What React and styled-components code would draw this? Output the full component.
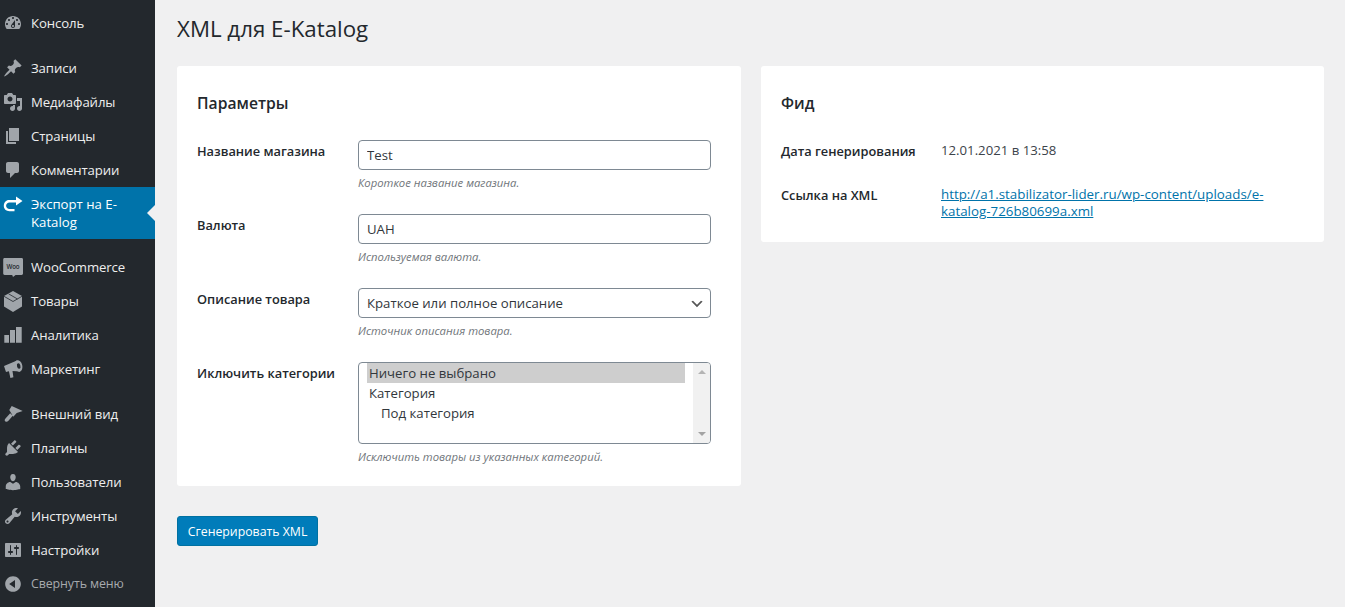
import React from 'react';
import styled, { createGlobalStyle } from 'styled-components';

const Global = createGlobalStyle`
  html, body { margin: 0; padding: 0; background: #f0f0f1; }
  body { font-family: "Open Sans", "Noto Sans", sans-serif; color: #3c434a; overflow: hidden; }
  * { box-sizing: border-box; }
`;

const Page = styled.div`
  display: flex;
  width: 1345px;
  height: 607px;
  overflow: hidden;
`;
const Sidebar = styled.nav`
  width: 155px;
  flex: none;
  background: #23282d;
  padding-top: 6px;
  display: flex;
  flex-direction: column;
`;
const MenuGroup = styled.div`
  display: flex;
  flex-direction: column;
  margin-bottom: 11px;
`;
const MenuItem = styled.a`
  position: relative;
  display: flex;
  align-items: ${p => (p.$active ? 'flex-start' : 'center')};
  min-height: 34px;
  padding: ${p => (p.$active ? '8px 8px 8px 3px' : '0 8px 0 3px')};
  gap: 8px;
  font-size: ${p => (p.$muted ? '12.4px' : '13.2px')};
  line-height: 18px;
  letter-spacing: ${p => (p.$active ? '0' : '-0.1px')};
  color: ${p => (p.$active ? '#fff' : p.$muted ? '#a7aaad' : '#eee')};
  background: ${p => (p.$active ? '#0073aa' : 'transparent')};
  &::after {
    content: '';
    display: ${p => (p.$active ? 'block' : 'none')};
    position: absolute;
    right: 0;
    top: 18px;
    border: 8px solid transparent;
    border-right-color: #f0f0f1;
    border-left-width: 0;
  }
`;
const MenuIcon = styled.svg`
  width: 20px;
  height: 20px;
  flex: none;
  overflow: visible;
  fill: ${p => (p.$active ? '#fff' : '#a0a5aa')};
`;
const Main = styled.main`
  flex: 1;
  min-width: 0;
  padding: 0 21px 0 22px;
`;
const Title = styled.h1`
  margin: 0;
  padding-top: 14px;
  height: 66px;
  font-size: 22.3px;
  line-height: 30px;
  font-weight: 400;
  color: #23282d;
`;
const Columns = styled.div`
  display: grid;
  grid-template-columns: 564px 563px;
  gap: 20px;
  align-items: start;
`;
const Card = styled.section`
  background: #fff;
  border-radius: 3px;
  padding: 26px 20px ${p => p.$bottom ?? 21}px;
`;
const CardTitle = styled.h2`
  margin: 0 0 25px;
  font-size: 15.7px;
  line-height: 23px;
  font-weight: 600;
  color: #23282d;
`;
const FieldRow = styled.div`
  display: grid;
  grid-template-columns: 161px 1fr;
  margin-bottom: 23px;
  &:last-child { margin-bottom: 0; }
`;
const Label = styled.label`
  font-size: 12.8px;
  line-height: 18px;
  font-weight: 600;
  color: #23282d;
  padding-top: 2px;
`;
const fieldBase = `
  display: block;
  width: 353px;
  height: 30px;
  border: 1px solid #7e8993;
  border-radius: 4px;
  background-color: #fff;
  color: #32373c;
  font-family: inherit;
  font-size: 13.2px;
  padding: 0 8px;
  outline: none;
`;
const TextInput = styled.input`${fieldBase}`;
const Select = styled.select`
  ${fieldBase}
  appearance: none;
  padding-right: 24px;
  background-image: url("data:image/svg+xml;charset=UTF-8,%3Csvg xmlns='http://www.w3.org/2000/svg' width='20' height='20'%3E%3Cpath d='M5 6l5 5 5-5 2 1-7 7-7-7 2-1z' fill='%23555'/%3E%3C/svg%3E");
  background-repeat: no-repeat;
  background-size: 16px 16px;
  background-position: right 5px top 55%;
`;
const ListBox = styled.div`
  display: flex;
  width: 353px;
  height: 82px;
  border: 1px solid #7e8993;
  border-radius: 4px;
  overflow: hidden;
  background: #fff;
`;
const ListOptions = styled.div`
  flex: 1;
  padding: 0 8px;
`;
const ListOption = styled.div`
  height: 20px;
  line-height: 20px;
  padding-left: ${p => (p.$depth ? 14 : 2)}px;
  font-size: 13.2px;
  color: #32373c;
  background: ${p => (p.$selected ? '#cecece' : 'transparent')};
`;
const ScrollTrack = styled.div`
  width: 17px;
  flex: none;
  background: #f1f1f1;
  display: flex;
  flex-direction: column;
  justify-content: space-between;
  align-items: center;
  padding: 7px 0;
`;
const ScrollArrow = styled.span`
  width: 0;
  height: 0;
  border-left: 4px solid transparent;
  border-right: 4px solid transparent;
  border-${p => (p.$down ? 'top' : 'bottom')}: 4px solid ${p => (p.$down ? '#a3a3a3' : '#b4b4b4')};
`;
const Hint = styled.p`
  margin: 5px 0 0;
  font-size: 11.3px;
  line-height: 16px;
  font-style: italic;
  color: #70757a;
`;
const InfoRow = styled.div`
  display: grid;
  grid-template-columns: 160px 1fr;
  padding-top: 2px;
  margin-bottom: ${p => p.$gap ?? 0}px;
`;
const InfoValue = styled.div`
  font-size: 13.2px;
  line-height: 17px;
  color: #3c434a;
`;
const InfoLabel = styled.div`
  font-size: 12.8px;
  line-height: 18px;
  font-weight: 600;
  color: #23282d;
`;
const XmlLink = styled.a`
  font-size: 13.35px;
  color: #0073aa;
  text-decoration: underline;
`;
const Actions = styled.div`
  margin-top: 30px;
`;
const Button = styled.button`
  width: 141px;
  height: 30px;
  border: 1px solid #0071a1;
  border-radius: 3px;
  background: #007cba;
  color: #fff;
  font-family: inherit;
  font-size: 12.3px;
  padding: 0;
`;

const Icon = ({ d, active, children }) => (
  <MenuIcon viewBox="0 0 20 20" $active={active} aria-hidden="true">
    {d && <path d={d} fillRule="evenodd" />}
    {children}
  </MenuIcon>
);

const paths = {
  dashboard: 'M3.76 16h12.48c1.1-1.37 1.76-3.11 1.76-5 0-4.42-3.58-8-8-8s-8 3.58-8 8c0 1.89.66 3.63 1.76 5zM10 4c.55 0 1 .45 1 1s-.45 1-1 1-1-.45-1-1 .45-1 1-1zM6 6c.55 0 1 .45 1 1s-.45 1-1 1-1-.45-1-1 .45-1 1-1zm8 0c.55 0 1 .45 1 1s-.45 1-1 1-1-.45-1-1 .45-1 1-1zm-5.37 5.55L12 7v6c0 1.1-.9 2-2 2s-2-.9-2-2c0-.57.24-1.08.63-1.45zM4 10c.55 0 1 .45 1 1s-.45 1-1 1-1-.45-1-1 .45-1 1-1zm12 0c.55 0 1 .45 1 1s-.45 1-1 1-1-.45-1-1 .45-1 1-1zm-5 3c0-.55-.45-1-1-1s-1 .45-1 1 .45 1 1 1 1-.45 1-1z',
  post: 'M10.44 3.02l1.82-1.82 6.36 6.35-1.83 1.82c-1.05-.68-2.48-.57-3.41.36l-.75.75c-.92.93-1.04 2.35-.35 3.41l-1.83 1.82-2.41-2.41-2.8 2.79c-.42.42-3.38 2.71-3.8 2.29s1.86-3.39 2.28-3.81l2.79-2.79L4.1 9.36l1.83-1.82c1.05.69 2.48.57 3.4-.36l.75-.75c.93-.92 1.05-2.35.36-3.41z',
  media: 'M13 11V4c0-.55-.45-1-1-1h-1.67L9 1H5L3.67 3H2c-.55 0-1 .45-1 1v7c0 .55.45 1 1 1h10c.55 0 1-.45 1-1zM7 4.5c1.38 0 2.5 1.12 2.5 2.5S8.38 9.5 7 9.5 4.5 8.38 4.5 7 5.62 4.5 7 4.5zM14 6h5v10.5c0 1.38-1.12 2.5-2.5 2.5S14 17.88 14 16.5s1.12-2.5 2.5-2.5c.17 0 .34.02.5.05V9h-3V6zm-4 8.05V13h2v3.5c0 1.38-1.12 2.5-2.5 2.5S7 17.88 7 16.5 8.12 14 9.5 14c.17 0 .34.02.5.05z',
  page: 'M6 15V2h10v13H6zm-1 1h8v2H3V5h2v11z',
  comments: 'M5 2h9c1.1 0 2 .9 2 2v7c0 1.1-.9 2-2 2h-2l-5 5v-5H5c-1.1 0-2-.9-2-2V4c0-1.1.9-2 2-2z',
  redo: 'M6 5h7V1.6l6.5 4.4-6.5 4.4V7.5H6.5c-1.9 0-3.4 1.4-3.4 3.3s1.5 3.2 3.4 3.2h5v2.2h-5C3 16.2.8 14 .8 10.8S3 5 6 5z',
  bars: 'M1.3 10H6v7.7H1.3V10zM7 5h5v12.7H7V5zm6-3h5.7v15.7H13V2z',
  brush: 'M8.7 2l11 5-6 2-3.4 3.7L6.3 6l2.4-4zM7.2 9.2l2.6 2.6-4.6 5.2c-.9 1-2.2 1.1-3 .3-.8-.8-.6-2 .3-2.9l4.7-5.2z',
  plugin: 'M13.11 4.36L9.87 7.6 8 5.73l3.24-3.24c.35-.34 1.05-.2 1.56.32.52.51.66 1.21.31 1.55zm-8 1.77l.91-1.12 9.01 9.01-1.19.84c-.71.71-2.63 1.16-3.82 1.16H6.14L4.9 17.26c-.59.59-1.54.59-2.12 0-.59-.58-.59-1.53 0-2.12l1.24-1.24v-3.88c0-1.13.4-3.19 1.09-3.89zm7.26 3.97l3.24-3.24c.34-.35 1.04-.21 1.55.31.52.51.66 1.21.31 1.55l-3.24 3.25z',
  users: 'M10 9.25c-2.27 0-2.73-3.44-2.73-3.44C7 4.02 7.82 2 9.97 2c2.16 0 2.98 2.02 2.71 3.81 0 0-.41 3.44-2.68 3.44zm0 2.57L12.72 10c2.39 0 4.52 2.33 4.52 4.53v2.49s-3.65 1.13-7.24 1.13c-3.65 0-7.24-1.13-7.24-1.13v-2.49c0-2.25 1.94-4.48 4.47-4.48z',
  tools: 'M16.68 9.77c-1.34 1.34-3.3 1.67-4.95.99l-5.41 6.52c-.99.99-2.59.99-3.58 0s-.99-2.59 0-3.57l6.52-5.42c-.68-1.65-.35-3.61.99-4.95 1.28-1.28 3.12-1.62 4.72-1.06l-2.89 2.89 2.82 2.82 2.86-2.87c.53 1.58.18 3.39-1.08 4.65zM3.81 16.21c.4.39 1.04.39 1.43 0 .4-.4.4-1.04 0-1.43-.39-.4-1.03-.4-1.43 0-.39.39-.39 1.03 0 1.43z',
  settings: 'M18 16V4c0-.55-.45-1-1-1H3c-.55 0-1 .45-1 1v12c0 .55.45 1 1 1h14c.55 0 1-.45 1-1zM8 11h1c.55 0 1 .45 1 1s-.45 1-1 1H8v1.5c0 .28-.22.5-.5.5s-.5-.22-.5-.5V13H6c-.55 0-1-.45-1-1s.45-1 1-1h1V5.5c0-.28.22-.5.5-.5s.5.22.5.5V11zm5-2h-1c-.55 0-1-.45-1-1s.45-1 1-1h1V5.5c0-.28.22-.5.5-.5s.5.22.5.5V7h1c.55 0 1 .45 1 1s-.45 1-1 1h-1v5.5c0 .28-.22.5-.5.5s-.5-.22-.5-.5V9z',
  collapse: 'M10 2.16c4.33 0 7.84 3.51 7.84 7.84s-3.51 7.84-7.84 7.84S2.16 14.33 2.16 10 5.71 2.16 10 2.16zm2 11.72V6.12L6.18 9.97z',
};

const WooIcon = () => (
  <MenuIcon viewBox="0 0 20 20" aria-hidden="true">
    <path d="M1.6 1h17c.8 0 1.4.6 1.4 1.4v14.2c0 .8-.6 1.4-1.4 1.4h-6l-2.6 2-.8-2H1.6C.8 18 .2 17.4.2 16.6V2.4C.2 1.6.8 1 1.6 1z" />
    <text x="10" y="12" fontSize="6.2" fontWeight="600" textAnchor="middle" fill="#23282d" fontFamily="Open Sans, sans-serif">Woo</text>
  </MenuIcon>
);

const BoxIcon = () => (
  <MenuIcon viewBox="0 0 20 20" aria-hidden="true">
    <path d="M10 0l9 5v10.500L10 21l-9-5.500V5z" />
    <path d="M1 5.300l9 5.200 9-5.200M5.500 2.800l9 5.200" fill="none" stroke="#23282d" strokeWidth=".8" />
  </MenuIcon>
);

const MegaphoneIcon = () => (
  <MenuIcon viewBox="0 0 20 20" aria-hidden="true">
    <path d="M1 7L14 1.500l3 11-7.500-.4.900 6.200-3 .7-1.500-6.700L3 13z" />
    <ellipse cx="15.500" cy="7" rx="3.800" ry="5.800" transform="rotate(-14 15.500 7)" />
    <ellipse cx="15.700" cy="7" rx="1.700" ry="2.900" transform="rotate(-14 15.700 7)" fill="#23282d" />
  </MenuIcon>
);

export default function App() {
  return (
    <Page>
      <Global />
      <Sidebar>
        <MenuGroup>
          <MenuItem><Icon d={paths.dashboard} />Консоль</MenuItem>
        </MenuGroup>
        <MenuGroup>
          <MenuItem><Icon d={paths.post} />Записи</MenuItem>
          <MenuItem><Icon d={paths.media} />Медиафайлы</MenuItem>
          <MenuItem><Icon d={paths.page} />Страницы</MenuItem>
          <MenuItem><Icon d={paths.comments} />Комментарии</MenuItem>
          <MenuItem $active><Icon d={paths.redo} active />Экспорт на E-<br />Katalog</MenuItem>
        </MenuGroup>
        <MenuGroup>
          <MenuItem><WooIcon />WooCommerce</MenuItem>
          <MenuItem><BoxIcon />Товары</MenuItem>
          <MenuItem><Icon d={paths.bars} />Аналитика</MenuItem>
          <MenuItem><MegaphoneIcon />Маркетинг</MenuItem>
        </MenuGroup>
        <MenuGroup>
          <MenuItem><Icon d={paths.brush} />Внешний вид</MenuItem>
          <MenuItem><Icon d={paths.plugin} />Плагины</MenuItem>
          <MenuItem><Icon d={paths.users} />Пользователи</MenuItem>
          <MenuItem><Icon d={paths.tools} />Инструменты</MenuItem>
          <MenuItem><Icon d={paths.settings} />Настройки</MenuItem>
          <MenuItem $muted><Icon d={paths.collapse} />Свернуть меню</MenuItem>
        </MenuGroup>
      </Sidebar>
      <Main>
        <Title>XML для E-Katalog</Title>
        <Columns>
          <div>
            <Card>
              <CardTitle>Параметры</CardTitle>
              <FieldRow>
                <Label>Название магазина</Label>
                <div>
                  <TextInput defaultValue="Test" />
                  <Hint>Короткое название магазина.</Hint>
                </div>
              </FieldRow>
              <FieldRow>
                <Label>Валюта</Label>
                <div>
                  <TextInput defaultValue="UAH" />
                  <Hint>Используемая валюта.</Hint>
                </div>
              </FieldRow>
              <FieldRow>
                <Label>Описание товара</Label>
                <div>
                  <Select defaultValue="a">
                    <option value="a">Краткое или полное описание</option>
                  </Select>
                  <Hint>Источник описания товара.</Hint>
                </div>
              </FieldRow>
              <FieldRow>
                <Label>Иключить категории</Label>
                <div>
                  <ListBox>
                    <ListOptions>
                      <ListOption $selected>Ничего не выбрано</ListOption>
                      <ListOption>Категория</ListOption>
                      <ListOption $depth={1}>Под категория</ListOption>
                    </ListOptions>
                    <ScrollTrack>
                      <ScrollArrow />
                      <ScrollArrow $down />
                    </ScrollTrack>
                  </ListBox>
                  <Hint>Исключить товары из указанных категорий.</Hint>
                </div>
              </FieldRow>
            </Card>
            <Actions>
              <Button>Сгенерировать XML</Button>
            </Actions>
          </div>
          <Card $bottom={22}>
            <CardTitle>Фид</CardTitle>
            <InfoRow $gap={24}>
              <InfoLabel>Дата генерирования</InfoLabel>
              <InfoValue>12.01.2021 в 13:58</InfoValue>
            </InfoRow>
            <InfoRow>
              <InfoLabel>Ссылка на XML</InfoLabel>
              <InfoValue><XmlLink href="#">http://a1.stabilizator-lider.ru/wp-content/uploads/e-katalog-726b80699a.xml</XmlLink></InfoValue>
            </InfoRow>
          </Card>
        </Columns>
      </Main>
    </Page>
  );
}
